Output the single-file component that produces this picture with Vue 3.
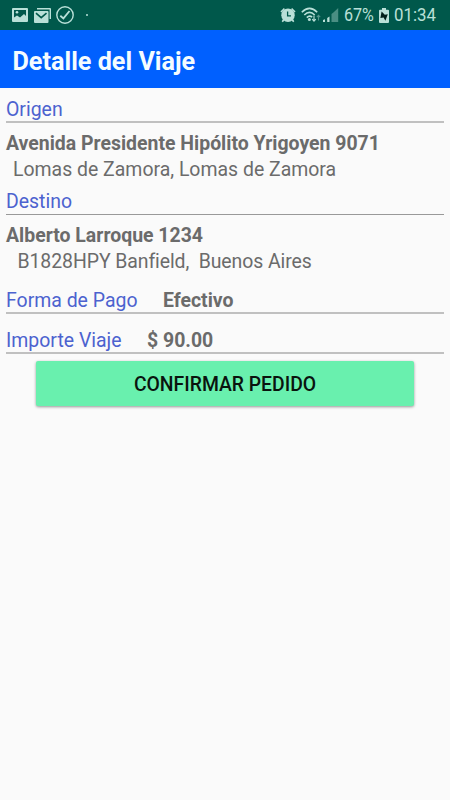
<script setup>
const trip = {
  origin: { street: 'Avenida Presidente Hipólito Yrigoyen 9071', area: 'Lomas de Zamora, Lomas de Zamora' },
  destination: { street: 'Alberto Larroque 1234', area: 'B1828HPY Banfield,\u00a0 Buenos Aires' },
  payment: 'Efectivo',
  amount: '$ 90.00'
}
</script>

<template>
  <div class="screen">
    <div class="status">
      <div class="left">
        <svg class="picture" width="16" height="14" viewBox="0 0 16 14">
          <path fill-rule="evenodd" d="M1 0H15Q16 0 16 1V13Q16 14 15 14H1Q0 14 0 13V1Q0 0 1 0ZM2 2V9.5L5 7.5L8 9.5L12 6L14 8V2Z" />
          <circle cx="5" cy="4.3" r="1.3" />
        </svg>
        <svg class="mail" width="17" height="15" viewBox="0 0 17 15">
          <path d="M3 0H16Q17 0 17 1V11H15.6V1.6H3Z" />
          <path d="M1 3H13.5Q14.5 3 14.5 4V14Q14.5 15 13.5 15H1Q0 15 0 14V4Q0 3 1 3Z" />
          <path class="cut" d="M2 5.2L7.2 9.6L12.5 5.2" />
        </svg>
        <svg class="check" width="18" height="18" viewBox="0 0 18 18">
          <circle cx="9" cy="9" r="8.2" />
          <path d="M4.3 9.7L7.4 12.4L13.5 5" />
        </svg>
        <i class="dot"></i>
      </div>
      <div class="right">
        <svg class="alarm" width="16" height="16" viewBox="0 0 16 16">
          <circle cx="8" cy="8.3" r="6.7" />
          <path d="M0.4 4.6L3.9 1L5 2.2L1.6 5.6ZM15.6 4.6L12.1 1L11 2.2L14.4 5.6ZM3 12L4.5 13.5L2.8 15.3L1.7 14.3ZM13 12L11.5 13.5L13.2 15.3L14.3 14.3Z" />
          <path class="hands" d="M7.6 4.5V8.8H11" />
        </svg>
        <svg class="wifi" width="20" height="16" viewBox="0 0 20 16">
          <path d="M0.8 5.2Q8.5 -2.5 16.2 5.2M3.3 8Q8.5 2.7 13.7 8M5.8 10.6Q8.5 8 11.2 10.2" />
          <circle cx="8.4" cy="12.6" r="1.5" />
          <path class="arrows" d="M13 8.5V14M11.2 12.2L13 14.2L14.8 12.2" />
          <path class="arrows dim" d="M17.5 13.5V8.5M15.8 10.2L17.5 8.3L19.2 10.2" />
        </svg>
        <svg class="signal" width="16" height="14" viewBox="0 0 16 14">
          <path d="M0 14V12L2 11.3V14ZM4.2 14V10L6.5 8.5V14Z" />
          <path class="faint" d="M8.5 14V6L10.7 4.2V14ZM10.7 14V4.2L15.2 0V14Z" />
        </svg>
        <span class="pct">67%</span>
        <svg class="battery" width="10" height="15" viewBox="0 0 10 15">
          <path d="M3 0H7V1.7H9Q10 1.7 10 2.7V14Q10 15 9 15H1Q0 15 0 14V2.7Q0 1.7 1 1.7H3Z" />
          <path class="bolt" d="M2.6 3.6L5.8 6.8L8.8 6.2L6.4 12.8L4.6 9.6L1.4 10Z" />
        </svg>
        <span class="time">01:34</span>
      </div>
    </div>
    <header><h1>Detalle del Viaje</h1></header>
    <main>
      <div class="row"><span class="label">Origen</span></div>
      <div class="address">
        <div><b>{{ trip.origin.street }}</b></div>
        <div class="area">{{ trip.origin.area }}</div>
      </div>
      <div class="row destination"><span class="label">Destino</span></div>
      <div class="address second">
        <div><b>{{ trip.destination.street }}</b></div>
        <div class="area">{{ trip.destination.area }}</div>
      </div>
      <div class="row payment"><span class="label">Forma de Pago</span><b>{{ trip.payment }}</b></div>
      <div class="row amount"><span class="label">Importe Viaje</span><b>{{ trip.amount }}</b></div>
      <button>CONFIRMAR PEDIDO</button>
    </main>
  </div>
</template>

<style>
body { margin: 0; background: #fafafa; }
</style>

<style scoped>
.screen { width: 450px; height: 800px; background: #fafafa; font-family: Roboto, sans-serif; color: #6b6b6b; overflow: hidden; }
.status { height: 30px; background: #00584b; color: #b9e0d8; display: flex; justify-content: space-between; box-sizing: border-box; padding: 0 13px 0 12px; }
.left, .right { display: flex; align-items: center; }
svg { fill: #b9e0d8; flex: none; display: block; }
.mail { margin-left: 6px; }
.cut { fill: none; stroke: #00584b; stroke-width: 1.6; }
.check { margin-left: 5px; fill: none; stroke: #b9e0d8; stroke-width: 1.4; }
.check path { stroke-width: 1.8; }
.dot { width: 2px; height: 2px; border-radius: 1px; background: #b9e0d8; margin-left: 12px; }
.hands { fill: none; stroke: #00584b; stroke-width: 1.3; }
.alarm { margin-right: 5px; }
.wifi path { fill: none; stroke: #b9e0d8; stroke-width: 1.6; }
.wifi .arrows { stroke-width: 1.1; }
.wifi .dim { opacity: .45; }
.signal { margin-left: 2px; }
.faint { opacity: .4; }
.pct, .time { font-size: 18.5px; line-height: 30px; transform-origin: left center; white-space: nowrap; }
.pct { margin-left: 5px; width: 30px; transform: scaleX(.87); }
.battery { margin-left: 5px; }
.battery .bolt { fill: #001f1a; }
.time { margin-left: 5px; width: 43px; transform: scaleX(.91); }
header { height: 58px; background: #0060ff; padding-left: 12.5px; display: flex; align-items: center; box-sizing: border-box; padding-top: 6px; }
h1 { margin: 0; font-size: 25.2px; line-height: 30px; font-weight: 700; color: #f4fcff; white-space: nowrap; }
main { padding: 9px 6px 0; font-size: 19.45px; line-height: 26px; white-space: nowrap; }
.row { height: 24px; line-height: 25px; border-bottom: 2px solid #c0c0c0; display: flex; }
.label { color: #4c62cf; }
.address { padding-top: 8px; }
.area { padding-left: 7px; }
.destination { margin-top: 6px; height: 25px; border-bottom: 1px solid #999; }
.second .area { padding-left: 11.5px; letter-spacing: -.08px; }
.payment { margin-top: 13px; line-height: 26px; }
.row b { margin-left: 25.5px; }
.amount { margin-top: 14px; }
button { display: block; width: 378px; height: 45px; margin: 7px 0 0 30px; padding: 2px 0 0; border: 0; border-radius: 2px; background: #69f0ae; box-shadow: 0 1px 3px rgba(0,0,0,.4); font: 500 19.35px/43px Roboto, sans-serif; color: #0a140e; }
</style>
